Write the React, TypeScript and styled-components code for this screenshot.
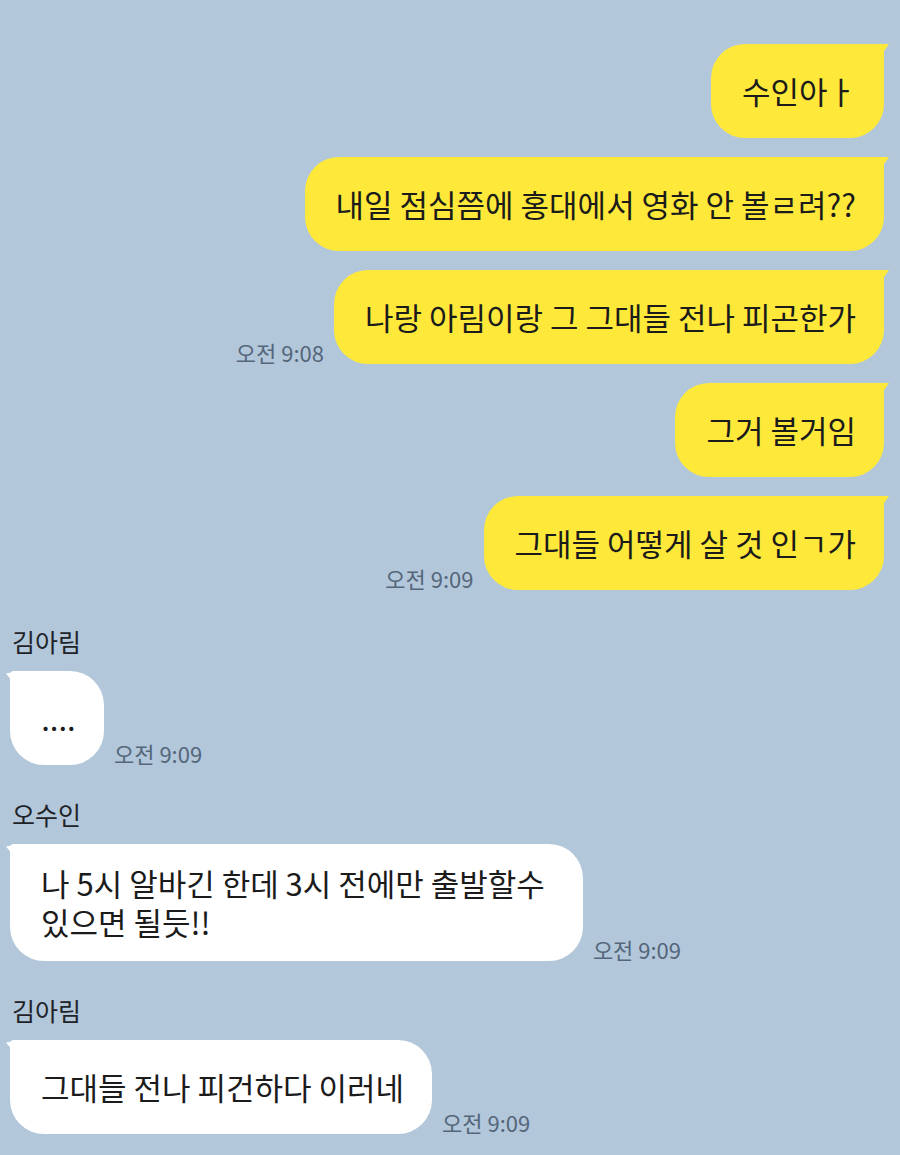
import React from 'react'
import styled, { createGlobalStyle } from 'styled-components';

const GlobalStyle = createGlobalStyle`
    html, body {
        margin: 0;
        padding: 0;
        background: #b2c7da;
    }
`

const YELLOW = '#fee93a';

const Page = styled.div`
    width: 900px;
    height: 1155px;
    box-sizing: border-box;
    padding: 44px 16px 0 10px;
    background: #b2c7da;
    font-family: "Noto Sans CJK KR", "Noto Sans", sans-serif;
    display: flex;
    flex-direction: column;
    overflow: hidden;
`

const SentGroup = styled.div`
    display: flex;
    flex-direction: column;
    align-items: flex-end;
    gap: 19px;
    margin-bottom: 36px;
`

const Row = styled.div<{$mine: boolean}>`
    display: flex;
    flex-direction: ${({$mine}) => $mine ? 'row-reverse' : 'row'};
    align-items: flex-end;
    gap: 10px;
`

const Bubble = styled.div<{$mine: boolean; $left?: boolean}>`
    position: relative;
    box-sizing: border-box;
    min-width: 94px;
    min-height: 94px;
    padding: 19px ${({$left}) => $left ? '38px' : '28px'} 20px 31px;
    display: flex;
    align-items: center;
    justify-content: ${({$left}) => $left ? 'flex-start' : 'center'};
    font-size: 31px;
    line-height: 39px;
    color: #1b1b1b;
    white-space: nowrap;
    background: ${({$mine}) => $mine ? YELLOW : '#ffffff'};
    border-radius: ${({$mine}) => $mine ? '34px 4px 34px 34px' : '4px 34px 34px 34px'};

    &::after {
        content: "";
        position: absolute;
        top: 0;
        width: 14px;
        height: 20px;
        background: inherit;
        ${({$mine}) => $mine
            ? 'right: -5px; clip-path: polygon(0 0, 100% 0, 0 100%);'
            : 'left: -4px; clip-path: polygon(0 12%, 100% 0, 100% 100%);'}
    }
`

const Line = styled.div`
    line-height: 39px;
`

const Time = styled.span`
    font-size: 22px;
    line-height: 24px;
    color: #55667a;
    white-space: nowrap;
`

const Received = styled.div`
    display: flex;
    flex-direction: column;
    align-items: flex-start;
    margin-bottom: 34px;
`

const Name = styled.div`
    font-size: 25px;
    line-height: 30px;
    color: #1f2328;
    padding-left: 2px;
    margin-bottom: 15px;
`

type Msg = { text: string; time?: string };

const sent: Msg[] = [
    { text: '수인아ㅏ' },
    { text: '내일 점심쯤에 홍대에서 영화 안 볼ㄹ려??' },
    { text: '나랑 아림이랑 그 그대들 전나 피곤한가', time: '오전 9:08' },
    { text: '그거 볼거임' },
    { text: '그대들 어떻게 살 것 인ㄱ가', time: '오전 9:09' },
];

const received: { name: string; lines: string[]; time: string }[] = [
    { name: '김아림', lines: ['....'], time: '오전 9:09' },
    { name: '오수인', lines: ['나 5시 알바긴 한데 3시 전에만 출발할수', '있으면 될듯!!'], time: '오전 9:09' },
    { name: '김아림', lines: ['그대들 전나 피건하다 이러네'], time: '오전 9:09' },
];

export default function App() {
    return (
        <>
            <GlobalStyle />
            <Page>
                <SentGroup>
                    {sent.map((m, i) => (
                        <Row key={i} $mine>
                            <Bubble $mine>{m.text}</Bubble>
                            {m.time && <Time>{m.time}</Time>}
                        </Row>
                    ))}
                </SentGroup>
                {received.map((m, i) => (
                    <Received key={i}>
                        <Name>{m.name}</Name>
                        <Row $mine={false}>
                            <Bubble $mine={false} $left={m.lines.length > 1}>
                                <div>
                                    {m.lines.map((l, j) => <Line key={j}>{l}</Line>)}
                                </div>
                            </Bubble>
                            <Time>{m.time}</Time>
                        </Row>
                    </Received>
                ))}
            </Page>
        </>
    );
}
